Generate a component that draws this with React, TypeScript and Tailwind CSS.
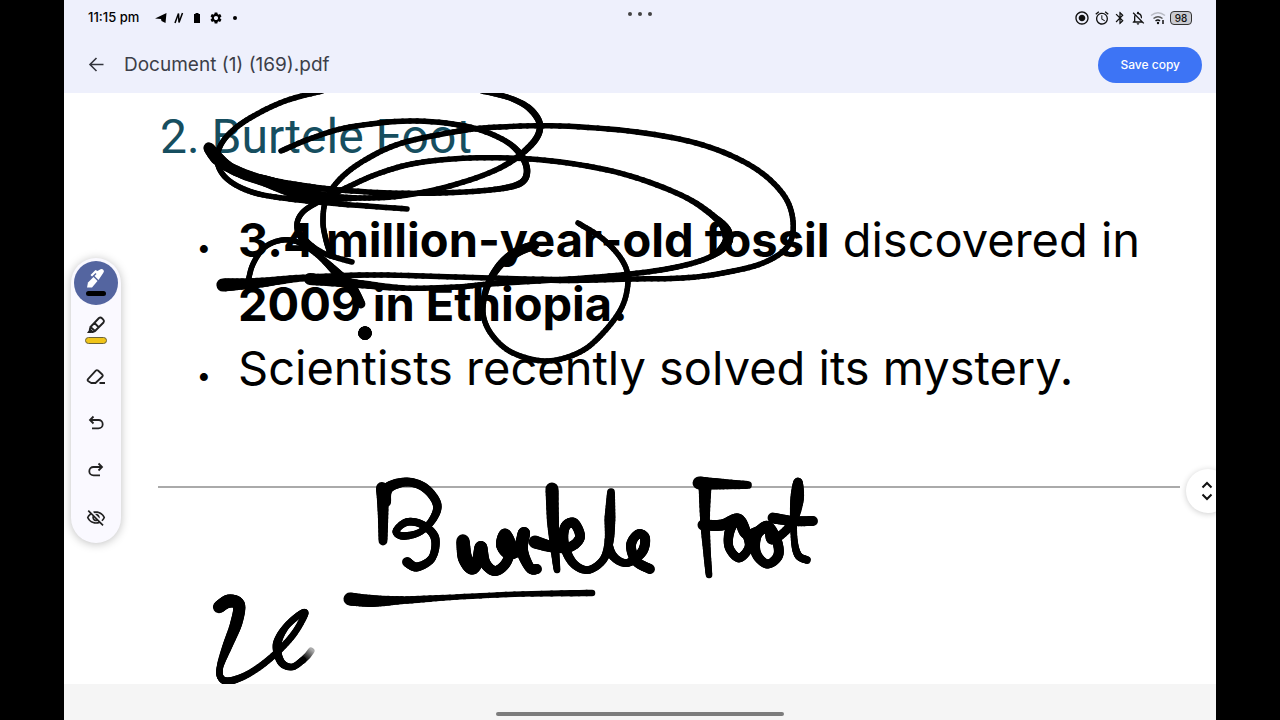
import React from 'react';
import { MdAlarm, MdBluetooth, MdOutlineNotificationsOff, MdOutlineVisibilityOff, MdRadioButtonChecked, MdSettings } from 'react-icons/md';

// A pen sample: x, y and the width of the nib there
type Sample = [number, number, number];

const inkStrokes: Sample[][] = [
    // Loops round the heading
    [[209, 148, 10], [218, 159, 12], [233, 169, 9], [263, 180, 9], [300, 186, 7], [340, 190, 5], [390, 193, 5], [440, 193, 5], [490, 190, 5], [519, 184, 6], [527, 172, 6], [521, 155, 6], [502, 139, 5], [465, 126, 5], [410, 121, 5], [350, 127, 5], [312, 138, 5], [281, 151, 5]],
    [[210, 150, 9], [222, 163, 9], [240, 174, 7], [265, 181, 10], [295, 191, 13], [325, 197, 9], [360, 198, 5], [400, 196, 5], [450, 186, 5], [500, 168, 5], [531, 145, 6], [540, 126, 6], [530, 109, 6], [510, 98, 5], [482, 91, 5]],
    [[322, 91, 5], [285, 101, 5], [250, 118, 5], [228, 135, 5], [218, 152, 5], [219, 168, 5], [231, 182, 5], [255, 193, 5], [290, 199, 5], [340, 204, 5], [407, 209, 5]],
    // Loops round the age of the fossil
    [[352, 262, 5], [323, 253, 5], [303, 239, 7], [297, 225, 5], [303, 212, 5], [320, 201, 5], [350, 186, 5], [380, 173, 5], [417, 163, 5], [470, 158, 5], [530, 159, 5], [587, 166, 5], [637, 178, 5], [687, 198, 5], [718, 220, 6], [727, 233, 10], [726, 244, 9], [710, 257, 5], [677, 267, 5], [630, 274, 5], [570, 279, 5], [490, 284, 5], [457, 287, 5], [403, 288, 5], [350, 283, 8], [310, 279, 11]],
    [[330, 253, 5], [326, 240, 5], [323, 222, 5], [326, 200, 5], [340, 179, 5], [365, 160, 5], [402, 143, 5], [460, 131, 5], [500, 127, 5], [560, 126, 5], [637, 132, 5], [703, 145, 5], [753, 167, 5], [783, 194, 5], [793, 221, 5], [788, 246, 5], [763, 263, 5], [723, 273, 5], [683, 278, 5], [630, 279, 5], [560, 280, 6], [490, 278, 5], [423, 276, 5], [367, 275, 5], [303, 278, 6], [257, 283, 9], [223, 285, 12]],
    [[248, 282, 5], [253, 264, 5], [265, 247, 5], [283, 240, 5], [300, 243, 5], [320, 257, 5], [337, 273, 8], [351, 287, 10], [361, 304, 8]],
    [[365, 333, 12], [365, 333, 12]],
    // Circle round the place
    [[578, 223, 5], [603, 239, 5], [622, 260, 5], [628, 280, 5], [622, 307, 5], [603, 333, 5], [580, 352, 5], [547, 361, 5], [513, 353, 5], [492, 335, 5], [483, 313, 5], [487, 287, 6], [500, 265, 7], [517, 252, 9], [535, 245, 8]],
    // Handwritten "Burtele"
    [[382, 488, 11], [383, 510, 10], [383, 541, 8]],
    [[386, 502, 9], [388, 488, 10], [407, 482, 8], [425, 488, 8], [437, 504, 8], [433, 519, 7], [420, 532, 6], [403, 536, 7], [396, 531, 6], [407, 522, 7], [423, 525, 7], [435, 538, 8], [432, 558, 7], [417, 567, 8], [407, 562, 9]],
    [[463, 541, 12], [465, 558, 13], [472, 568, 12], [478, 560, 11], [481, 547, 11], [485, 563, 10], [495, 571, 9], [506, 563, 9], [511, 546, 9], [505, 534, 10], [501, 545, 9], [508, 554, 9], [518, 550, 10], [524, 533, 11], [522, 550, 11], [530, 568, 9], [537, 569, 9]],
    [[552, 489, 12], [553, 522, 11], [555, 550, 8], [557, 570, 6]],
    [[535, 542, 12], [553, 547, 10], [570, 547, 9], [580, 537, 9], [574, 523, 9], [565, 527, 9], [564, 544, 9], [573, 563, 8], [588, 570, 7], [603, 560, 7], [609, 542, 8], [610, 517, 10], [611, 492, 7]],
    [[608, 540, 6], [613, 556, 8], [627, 563, 7], [642, 552, 9], [645, 538, 9], [638, 534, 8], [631, 545, 9], [636, 561, 9], [650, 569, 9]],
    [[350, 599, 12], [373, 601, 11], [407, 600, 7], [457, 597, 5], [523, 594, 5], [592, 593, 6]],
    // Handwritten "Foot"
    [[699, 483, 12], [720, 484, 10], [748, 485, 7]],
    [[705, 487, 12], [705, 520, 9], [707, 552, 7], [709, 575, 6]],
    [[703, 525, 10], [722, 525, 10], [738, 519, 10], [746, 532, 9], [749, 547, 8], [739, 558, 8], [729, 547, 8], [730, 530, 9], [738, 520, 9], [745, 534, 8], [757, 531, 8], [768, 526, 9], [777, 541, 9], [778, 556, 9], [767, 564, 8], [756, 553, 9], [757, 535, 9], [768, 528, 8], [772, 540, 8], [790, 526, 8], [800, 502, 6], [798, 482, 8], [794, 501, 7], [794, 537, 6], [798, 555, 7], [807, 560, 7]],
    [[773, 518, 10], [793, 521, 9], [813, 521, 9]],
    // The figures still being written
    [[219, 607, 11], [229, 601, 12], [239, 605, 11], [236, 624, 11], [227, 647, 9], [220, 667, 6], [221, 678, 6], [230, 681, 7], [250, 673, 6], [273, 656, 6], [293, 635, 6], [305, 614, 6], [299, 615, 6], [285, 628, 6], [277, 645, 8], [281, 662, 7], [292, 667, 6], [303, 660, 6]],
];

const STEPS = 8;

const spline = (a: number, b: number, c: number, d: number, t: number) =>
    0.5 * (2 * b + (c - a) * t + (2 * a - 5 * b + 4 * c - d) * t * t + (3 * b - a - 3 * c + d) * t * t * t);

// Smooths the samples of one stroke
const smooth = (samples: Sample[]): Sample[] => {
    const out: Sample[] = [samples[0]];
    for (let i = 0; i < samples.length - 1; i++) {
        const p0 = samples[Math.max(i - 1, 0)];
        const p1 = samples[i];
        const p2 = samples[i + 1];
        const p3 = samples[Math.min(i + 2, samples.length - 1)];
        for (let s = 1; s <= STEPS; s++) {
            const t = s / STEPS;
            out.push([
                spline(p0[0], p1[0], p2[0], p3[0], t),
                spline(p0[1], p1[1], p2[1], p3[1], t),
                p1[2] + (p2[2] - p1[2]) * t,
            ]);
        }
    }
    return out;
};

// Ink spreads a little past the nib
const INK_SPREAD = 1.1;

const InkStroke: React.FC<{ samples: Sample[] }> = ({ samples }) => {
    const points = smooth(samples);
    return (
        <g>
            {points.slice(1).map((p, i) => (
                <line key={i} x1={points[i][0]} y1={points[i][1]} x2={p[0]} y2={p[1]} strokeWidth={p[2] * INK_SPREAD} />
            ))}
        </g>
    );
};

const InkLayer: React.FC = () => (
    <svg
        className="absolute inset-0 w-full h-full pointer-events-none"
        viewBox="64 93 1152 591"
        preserveAspectRatio="xMinYMin meet"
        stroke="#000"
        strokeLinecap="round"
        fill="none"
        aria-hidden="true"
    >
        <defs>
            <linearGradient id="wet-ink" gradientUnits="userSpaceOnUse" x1="304" y1="659" x2="312" y2="650">
                <stop offset="0" stopColor="#000" />
                <stop offset="1" stopColor="#aaa" />
            </linearGradient>
        </defs>
        <path d="M303 660 Q308 656 311 651" stroke="url(#wet-ink)" strokeWidth="7" />
        {inkStrokes.map((samples, i) => (
            <InkStroke key={i} samples={samples} />
        ))}
    </svg>
);

const LineIcon: React.FC<{ children: React.ReactNode }> = ({ children }) => (
    <svg className="w-5 h-5" viewBox="0 0 20 20" fill="none" stroke="currentColor" strokeWidth="1.8" aria-hidden="true">
        {children}
    </svg>
);

const PenIcon: React.FC = () => (
    <svg className="w-7 h-8" viewBox="0 0 28 32" aria-hidden="true">
        <path d="M5 20.500 L6 15.500 L11.500 10 L15.500 14 L10 20.500Z" fill="#fff" />
        <path d="M12.500 9 L14.500 7 L13.500 6 L10 9.500 L8.500 8 L13.500 3 L15.500 4 L18.500 2.300 Q20 1.500 21.500 3 Q22.500 4.500 21.200 6 L16.500 13Z" fill="#fff" />
        <rect x="4" y="24" width="20" height="5" rx="2.500" fill="#000" />
    </svg>
);

const HighlighterIcon: React.FC = () => (
    <svg className="w-7 h-8" viewBox="0 0 28 32" fill="none" aria-hidden="true">
        <path d="M8.500 13 L17 4 Q18.500 3 20 4.300 L21.300 5.600 Q22.600 7 21.500 8.500 L13 17Z M12.500 9 L17 13.500 M8.500 13 L7.800 15.500 L10.500 18 L13 17" stroke="#222" strokeWidth="1.900" strokeLinejoin="round" />
        <path d="M7.800 15 L5 19 L9.500 19 L11 17.500Z" fill="#222" />
        <rect x="3.500" y="23.500" width="21" height="6" rx="3" fill="#f0c419" stroke="#6b6338" />
    </svg>
);

const EraserIcon: React.FC = () => (
    <LineIcon>
        <path d="M2 12.200 L9.800 3.700 Q10.800 2.700 12 3.500 L16.300 7.500 Q17.200 8.500 16.400 9.500 L9.500 16 H5.200 L2 14 Q1.200 13.100 2 12.200Z M13.500 16 H19" strokeLinejoin="round" />
    </LineIcon>
);

const UndoIcon: React.FC = () => (
    <LineIcon>
        <path d="M7.500 2.500 L4 6 L7.500 9.500 M4.300 6 H12.500 A4.200 4.200 0 0 1 12.500 14.400 H6" />
    </LineIcon>
);

const RedoIcon: React.FC = () => (
    <LineIcon>
        <path d="M12.500 2.500 L16 6 L12.500 9.500 M15.700 6 H7.500 A4.200 4.200 0 0 0 7.500 14.400 H14" />
    </LineIcon>
);

const tools = [
    { label: 'Pen', icon: <PenIcon />, active: true },
    { label: 'Highlighter', icon: <HighlighterIcon /> },
    { label: 'Eraser', icon: <EraserIcon /> },
    { label: 'Undo', icon: <UndoIcon /> },
    { label: 'Redo', icon: <RedoIcon /> },
    { label: 'Hide annotations', icon: <MdOutlineVisibilityOff className="w-5 h-5" /> },
];

const Toolbar: React.FC = () => (
    <div className="absolute left-[7px] top-[165px] flex flex-col gap-[3px] p-[3px] rounded-full bg-[#faf9ff] shadow-[0_1px_10px_rgba(0,0,0,0.25)]">
        {tools.map(tool => (
            <button
                key={tool.label}
                type="button"
                aria-label={tool.label}
                className={`w-11 h-11 rounded-full flex items-center justify-center text-[#222] ${tool.active ? 'bg-[#5465a0]' : ''}`}
            >
                {tool.icon}
            </button>
        ))}
    </div>
);

const StatusBar: React.FC = () => (
    <div className="relative h-9 px-6 flex items-center justify-between text-black">
        <div className="flex items-center">
            <span className="text-[13px] font-medium">11:15 pm</span>
            <div className="flex items-center gap-1.5 ml-4">
                <svg className="w-3 h-3" viewBox="0 0 12 12" aria-hidden="true">
                    <path d="M0 6.500 L11.500 1 L10.500 11 L6.500 9 L6 7Z" />
                </svg>
                <svg className="w-3 h-3" viewBox="0 0 12 12" fill="none" stroke="#000" strokeWidth="1.500" aria-hidden="true">
                    <path d="M2 11 L5.500 1.500 L6 10.500 L9.500 1" />
                </svg>
                <svg className="w-3 h-3" viewBox="0 0 12 12" aria-hidden="true">
                    <path d="M4.500 1 H7.500 V2 H9 V11 H3 V2 H4.500Z" />
                </svg>
                <MdSettings className="w-3.5 h-3.5" />
                <span className="w-1 h-1 ml-1 rounded-full bg-black" />
            </div>
        </div>
        <div className="absolute left-1/2 top-3 -translate-x-1/2 flex gap-1.5">
            <span className="w-1 h-1 rounded-full bg-[#444]" />
            <span className="w-1 h-1 rounded-full bg-[#444]" />
            <span className="w-1 h-1 rounded-full bg-[#444]" />
        </div>
        <div className="flex items-center gap-1 text-[#111]">
            <MdRadioButtonChecked className="w-4 h-4" />
            <MdAlarm className="w-4 h-4" />
            <MdBluetooth className="w-3 h-4 scale-125" />
            <MdOutlineNotificationsOff className="w-4 h-4" />
            <svg className="w-4 h-4" viewBox="0 0 16 16" fill="none" strokeWidth="1.500" aria-hidden="true">
                <path d="M1 5.500 Q8 0 15 5.500" stroke="#b9bbc4" />
                <path d="M3.500 8.500 Q8 5 12.500 8.500" stroke="#555" />
                <path d="M5.500 11 Q8 9 10 11" stroke="#111" />
                <circle cx="8" cy="13" r="1.200" fill="#111" />
                <path d="M13 10 V14" stroke="#111" />
            </svg>
            <span className="w-[22px] h-3.5 border border-[#333] rounded-sm bg-[#c9cad0] flex items-center justify-center text-[10px] leading-none font-medium">98</span>
        </div>
    </div>
);

export default function App() {
    return (
        <div className="min-h-screen bg-black px-16 flex">
            <div className="flex-1 min-w-0 flex flex-col bg-[#f5f5f5] font-['Inter',sans-serif] overflow-hidden">
                <header className="bg-[#eef0fc]">
                    <StatusBar />
                    <div className="h-[57px] pl-6 pr-3.5 flex items-center">
                        <button type="button" aria-label="Back" className="mr-5 text-[#33343c]">
                            <svg className="w-4 h-5" viewBox="0 0 16 20" fill="none" stroke="currentColor" strokeWidth="1.600" aria-hidden="true">
                                <path d="M15.500 9.500 H2 M8.500 3 L2 9.500 L8.500 16" />
                            </svg>
                        </button>
                        <h1 className="text-[19px] leading-6 text-[#3c3e48]">Document (1) (169).pdf</h1>
                        <button type="button" className="ml-auto h-9 px-[22px] rounded-full bg-[#3d74f5] text-xs font-medium text-white">
                            Save copy
                        </button>
                    </div>
                </header>

                <main className="relative flex-1 bg-white">
                    <article className="pl-[94px] pr-9 pt-3 text-[47px] leading-[64px] text-black">
                        <h2 className="pl-0.5 text-[48px] font-['Roboto',sans-serif] text-[#164e5f]">2. Burtele Foot</h2>
                        <ul className="mt-[39px]">
                            <li className="flex">
                                <span className="w-20 pl-[38px] leading-[56px] font-bold">.</span>
                                <p className="flex-1"><b>3.4 million-year-old fossil</b> discovered in <b>2009 in Ethiopia.</b></p>
                            </li>
                            <li className="flex">
                                <span className="w-20 pl-[38px] leading-[56px] font-bold">.</span>
                                <p className="flex-1">Scientists recently solved its mystery.</p>
                            </li>
                        </ul>
                        <hr className="mt-[86px] border-t-2 border-[#aaa]" />
                    </article>
                    <InkLayer />
                    <Toolbar />
                    <button type="button" aria-label="Scroll" className="absolute -right-3.5 top-[376px] w-11 h-11 rounded-full bg-white shadow-[0_1px_6px_rgba(0,0,0,0.2)] pl-3.5">
                        <svg className="w-4 h-5" viewBox="0 0 16 20" fill="none" stroke="#111" strokeWidth="2" aria-hidden="true">
                            <path d="M2.500 6.500 L7 2 L11.500 6.500 M2.500 13.500 L7 18 L11.500 13.500" />
                        </svg>
                    </button>
                </main>

                <footer className="h-9 flex items-end justify-center pb-1">
                    <div className="w-1/4 h-1 rounded-full bg-[#7c7c7c]" />
                </footer>
            </div>
        </div>
    );
}
